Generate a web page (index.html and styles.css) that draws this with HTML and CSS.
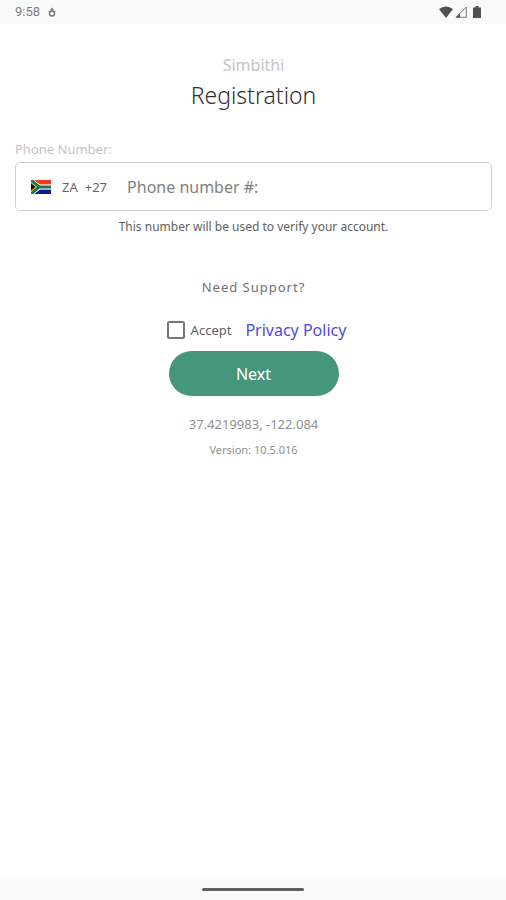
FILE: index.html
```html
<!DOCTYPE html>
<html lang="en">
<head>
<meta charset="utf-8">
<meta name="viewport" content="width=device-width, initial-scale=1">
<title>Registration</title>
<link rel="stylesheet" href="styles.css">
</head>
<body>
<header class="status">
  <span class="clock">9:58</span>
  <svg class="debug" viewBox="0 0 16 20" aria-hidden="true"><path d="M8 1 12 6H4z" fill="#777"/><path d="M1 9h14M8 5v5" stroke="#777" stroke-width="2"/><circle cx="8" cy="13" r="5" fill="none" stroke="#777" stroke-width="3"/></svg>
  <span class="signals">
    <svg width="14" height="12" viewBox="0 0 14 12" aria-hidden="true"><path d="M0 3Q7-2 14 3L7 12z" fill="#505050"/></svg>
    <svg width="12" height="12" viewBox="0 0 12 12" aria-hidden="true"><path d="M1 11.3 11.3 1v10.3z" fill="none" stroke="#777"/><path d="M1 11.500 5 7.500v4z" fill="#505050"/></svg>
    <svg class="battery" width="8" height="12" viewBox="0 0 8 12" aria-hidden="true"><path d="M2.500 0h3v1.500H8V12H0V1.500h2.500z" fill="#505050"/></svg>
  </span>
</header>
<main class="page">
  <p class="brand">Simbithi</p>
  <h1 class="title">Registration</h1>
  <form class="form">
    <label class="label" for="phone">Phone Number:</label>
    <div class="field">
      <button class="country" type="button">
        <svg class="flag" viewBox="0 0 20 14" aria-hidden="true"><path fill="#fff" d="M0 0h20v14H0z"/><path fill="#f03a1c" d="M2 0h18v4.500H9z"/><path fill="#0a1a94" d="M2 14h18V9.500H9z"/><path d="M0 0 8 7h12M0 14l8-7" fill="none" stroke="#fff" stroke-width="4.500"/><path d="M0 0 8 7h12M0 14l8-7" fill="none" stroke="#17794f" stroke-width="3"/><path fill="#e7b52f" d="M0 2 6 7l-6 5z"/><path fill="#111" d="M0 3.300 4.500 7 0 10.700z"/></svg>
        <span>ZA</span><span>+27</span>
      </button>
      <input class="phone" id="phone" type="tel" placeholder="Phone number #:">
    </div>
    <p class="hint">This number will be used to verify your account.</p>
    <button class="support" type="button">Need Support?</button>
    <div class="consent">
      <label class="accept"><input class="check" type="checkbox">Accept</label>
      <a class="policy" href="#privacy">Privacy Policy</a>
    </div>
    <button class="next" type="button">Next</button>
  </form>
  <p class="coords">37.4219983, -122.084</p>
  <p class="version">Version: 10.5.016</p>
</main>
<footer class="navbar"><span class="handle"></span></footer>
</body>
</html>
```
FILE: styles.css
```css
* { box-sizing: border-box; }
body {
  margin: 0;
  min-height: 100vh;
  display: flex;
  flex-direction: column;
  background: #fff;
  color: #505050;
  font-family: "Noto Sans", sans-serif;
}
p, h1 { margin: 0; }
button { font: inherit; color: inherit; background: none; border: 0; padding: 0; }
.status {
  height: 24px;
  padding: 0 25px 0 15px;
  display: flex;
  align-items: center;
  gap: 8px;
  background: #fafafa;
}
.clock { font: 13px/24px Roboto, sans-serif; color: #808080; }
.debug { width: 8px; height: 10px; }
.signals { display: flex; align-items: center; gap: 2px; margin-left: auto; }
.battery { margin-left: 4px; }
.page {
  flex: 1;
  padding: 30px 14px 0 15px;
  display: flex;
  flex-direction: column;
  align-items: center;
}
.brand { font-size: 16px; line-height: 22px; color: #c4c4c4; }
.title { margin-top: 4px; font-size: 23px; line-height: 30px; font-weight: 300; color: #303030; }
.form { width: 100%; margin-top: 30px; display: flex; flex-direction: column; align-items: center; }
.label { align-self: flex-start; font-size: 13px; line-height: 18px; color: #c4c4c4; }
.field {
  width: 100%;
  height: 49px;
  margin-top: 4px;
  padding: 0 15px;
  display: flex;
  align-items: center;
  gap: 20px;
  border: 1px solid #d0d0d0;
  border-radius: 5px;
}
.country { display: flex; align-items: center; gap: 7px; font-size: 13px; color: #666; }
.flag { width: 20px; height: 14px; margin-right: 4px; }
.phone { flex: 1; min-width: 0; border: 0; padding: 0; outline: 0; background: none; font: inherit; font-size: 16px; }
.phone::placeholder { color: #808080; opacity: 1; }
.hint { margin-top: 7px; font-size: 12px; line-height: 18px; color: #606060; }
.support { margin-top: 42px; font-size: 13px; line-height: 18px; letter-spacing: 1px; color: #707070; }
.consent { margin-top: 23px; height: 22px; padding-left: 6px; display: flex; align-items: center; gap: 14px; }
.accept { display: flex; align-items: center; gap: 6px; font-size: 13px; color: #606060; }
.check { appearance: none; width: 18px; height: 18px; margin: 0; border: 2px solid #777; border-radius: 2px; }
.check:checked { background: #45967b; }
.policy { font-size: 16px; color: #4a4aec; text-decoration: none; }
.next {
  width: 170px;
  height: 45px;
  margin-top: 10px;
  border-radius: 23px;
  background: #45967b;
  color: #fff;
  font-size: 16px;
}
.coords { margin-top: 19px; font-size: 13px; line-height: 18px; color: #909090; }
.version { margin-top: 9px; font-size: 11px; line-height: 16px; color: #909090; }
.navbar { height: 22px; display: flex; align-items: center; justify-content: center; background: #fafafa; }
.handle { width: 102px; height: 3px; border-radius: 2px; background: #606060; }
```
